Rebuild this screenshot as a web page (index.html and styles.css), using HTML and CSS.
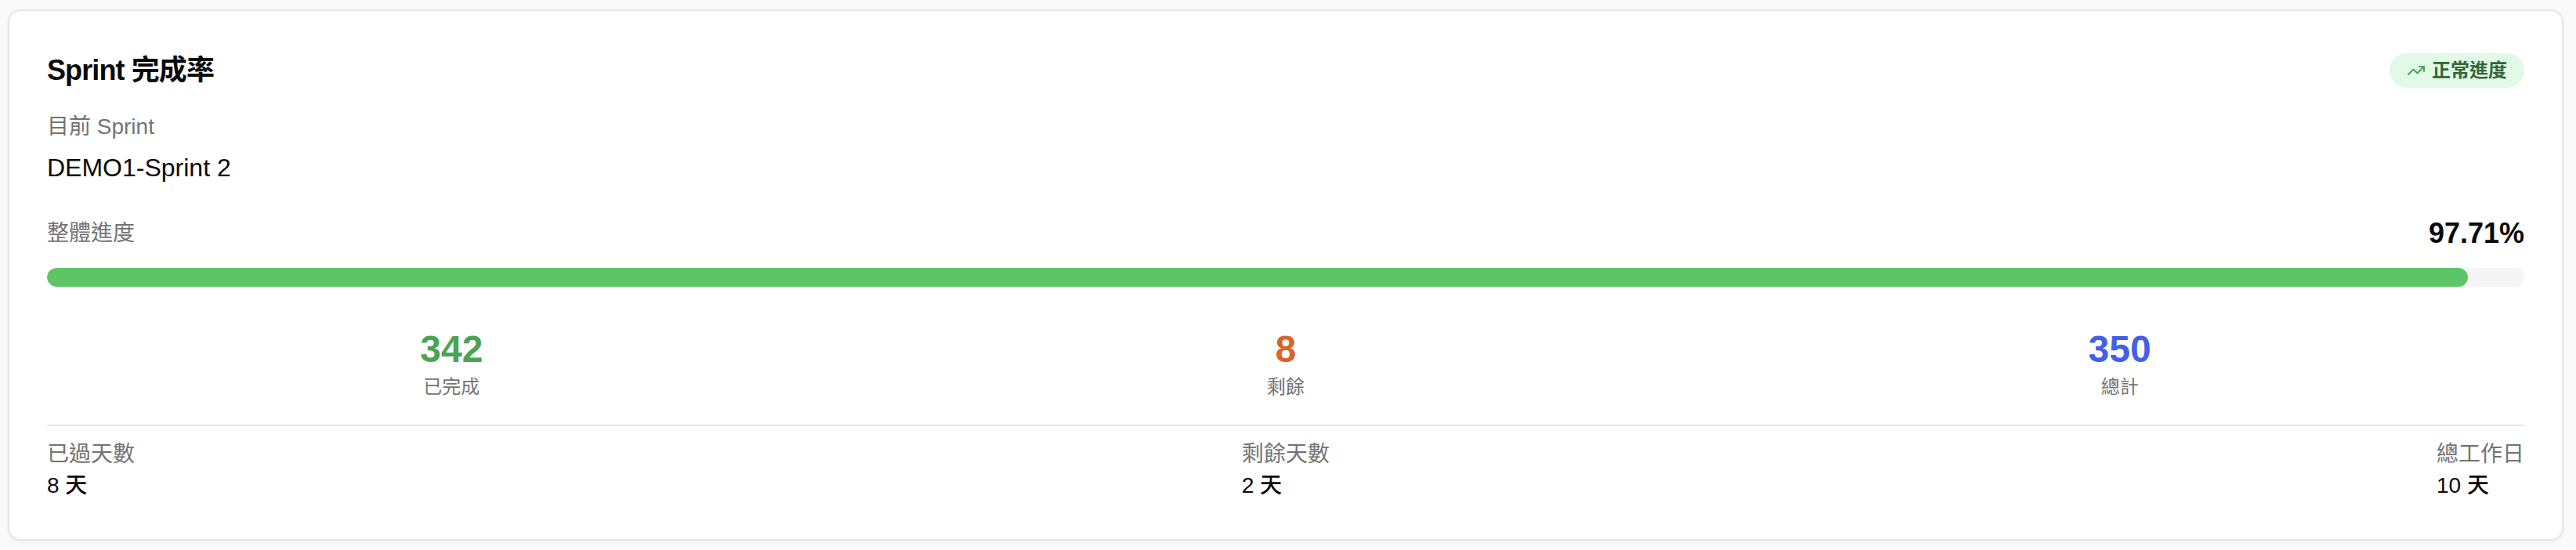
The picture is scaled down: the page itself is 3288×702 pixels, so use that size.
FILE: index.html
```html
<!DOCTYPE html>
<html lang="zh-Hant">
<head>
<meta charset="utf-8">
<title>Sprint 完成率</title>
<link rel="stylesheet" href="styles.css">
</head>
<body>
<section class="card">
  <header class="card-header">
    <h2 class="title">Sprint 完成率</h2>
    <span class="badge">
      <svg class="badge-icon" viewBox="0 0 24 24" fill="none" stroke="currentColor" stroke-width="2" stroke-linecap="round" stroke-linejoin="round"><polyline points="22 7 13.5 15.5 8.5 10.5 2 17"/><polyline points="16 7 22 7 22 13"/></svg>
      <span>正常進度</span>
    </span>
  </header>
  <div class="sprint">
    <p class="label">目前 Sprint</p>
    <p class="sprint-name">DEMO1-Sprint 2</p>
  </div>
  <div class="progress">
    <div class="progress-head">
      <span class="label">整體進度</span>
      <span class="percent">97.71%</span>
    </div>
    <div class="track"><div class="fill" style="width: 97.71%"></div></div>
  </div>
  <div class="stats">
    <div class="stat"><div class="number green">342</div><div class="caption">已完成</div></div>
    <div class="stat"><div class="number orange">8</div><div class="caption">剩餘</div></div>
    <div class="stat"><div class="number blue">350</div><div class="caption">總計</div></div>
  </div>
  <footer class="days">
    <div><p class="label">已過天數</p><p class="value">8 天</p></div>
    <div><p class="label">剩餘天數</p><p class="value">2 天</p></div>
    <div><p class="label">總工作日</p><p class="value">10 天</p></div>
  </footer>
</section>
</body>
</html>
```
FILE: styles.css
```css
* {
  box-sizing: border-box;
  margin: 0;
  padding: 0;
}

body {
  padding: 12px 16px 12px 10px;
  background: #fafafa;
  color: #0a0a0a;
  font-family: "Liberation Sans", "Noto Sans CJK TC", sans-serif;
  font-size: 28px;
  line-height: 40px;
}

.card {
  height: 678px;
  padding: 48px;
  background: #fff;
  border: 2px solid #e5e5e5;
  border-radius: 16px;
  box-shadow: 0 2px 4px rgba(0, 0, 0, 0.05);
}

.card-header {
  display: flex;
  align-items: center;
  justify-content: space-between;
}

.title {
  font-size: 36px;
  font-weight: 700;
  line-height: 56px;
  letter-spacing: -0.9px;
}

.badge {
  display: flex;
  align-items: center;
  gap: 8px;
  padding: 6px 22px;
  border-radius: 22px;
  background: #e1f9e7;
  color: #336638;
  font-size: 24px;
  font-weight: 700;
  line-height: 32px;
}

.badge-icon {
  width: 24px;
  height: 24px;
  color: #4ca352;
}

.label {
  color: #737373;
}

.sprint {
  margin-top: 24px;
}

.sprint-name {
  margin-top: 8px;
  font-size: 32px;
  line-height: 48px;
}

.progress {
  margin-top: 32px;
}

.progress-head {
  display: flex;
  align-items: center;
  justify-content: space-between;
}

.percent {
  font-size: 36px;
  font-weight: 700;
  line-height: 56px;
}

.track {
  height: 24px;
  margin-top: 16px;
  overflow: hidden;
  border-radius: 12px;
  background: #f5f5f5;
}

.fill {
  height: 100%;
  border-radius: 12px;
  background: #5cc566;
}

.stats {
  display: grid;
  grid-template-columns: repeat(3, 1fr);
  gap: 32px;
  padding: 48px 0 32px;
  text-align: center;
}

.number {
  font-size: 48px;
  font-weight: 700;
  line-height: 64px;
}

.green { color: #4ca352; }
.orange { color: #d96529; }
.blue { color: #445fe7; }

.caption {
  color: #737373;
  font-size: 24px;
  line-height: 32px;
}

.days {
  display: flex;
  justify-content: space-between;
  padding-top: 16px;
  border-top: 2px solid #e5e5e5;
}

.value {
  font-weight: 500;
}
```
